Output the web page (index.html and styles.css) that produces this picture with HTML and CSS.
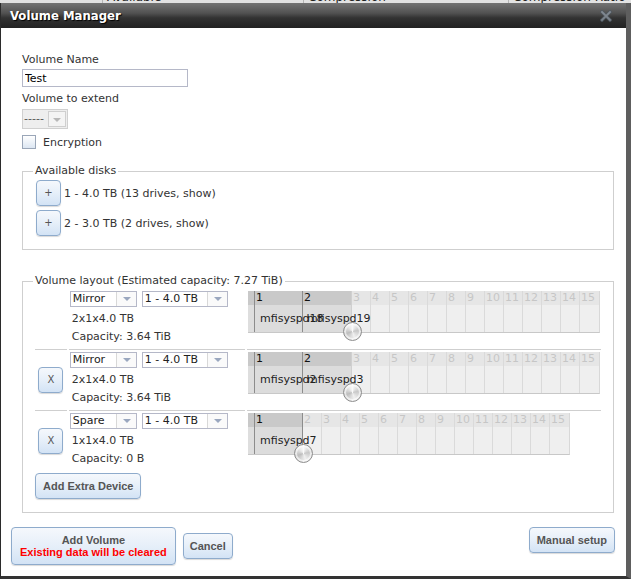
FILE: index.html
```html
<!DOCTYPE html>
<html lang="en">
<head>
    <meta charset="UTF-8">
    <meta name="viewport" content="width=device-width, initial-scale=1.0">
    <title>Volume Manager</title>
    <link rel="stylesheet" href="styles.css">
</head>
<body>
    <div class="page-head">
        <div class="col c1"><span></span></div>
        <div class="col c2"><span>Available</span></div>
        <div class="col c3"><span>Compression</span></div>
        <div class="col c4"><span>Compression Ratio</span></div>
    </div>

    <div class="dialog">
        <div class="titlebar">
            <span class="title">Volume Manager</span>
            <svg class="close" width="12" height="12" viewBox="0 0 12 12">
                <path d="M2 2 L10 10 M10 2 L2 10" stroke="#4f5861" stroke-width="3.6" stroke-linecap="square"/>
                <path d="M2 2 L10 10 M10 2 L2 10" stroke="#8d97a2" stroke-width="1.8" stroke-linecap="square"/>
            </svg>
        </div>

        <div class="content">
            <label class="label" for="volname">Volume Name</label>
            <input id="volname" class="text-input" type="text" value="Test">

            <div class="label extend">Volume to extend</div>
            <div class="select disabled">
                <span class="select-text">-----</span>
                <span class="select-arrow"></span>
            </div>

            <label class="check-row"><span class="checkbox"></span>Encryption</label>

            <fieldset class="group disks">
                <legend>Available disks</legend>
                <div class="disk-row">
                    <button class="btn square">+</button>
                    <span>1 - 4.0 TB (13 drives, show)</span>
                </div>
                <div class="disk-row">
                    <button class="btn square">+</button>
                    <span>2 - 3.0 TB (2 drives, show)</span>
                </div>
            </fieldset>

            <fieldset class="group layout">
                <legend>Volume layout (Estimated capacity: 7.27 TiB)</legend>
                <table class="vdevs">
                    <tr>
                        <td class="c-remove"></td>
                        <td class="c-opts">
                            <div class="opt-row">
                                <div class="select type"><span class="select-text">Mirror</span><span class="select-arrow"></span></div>
                                <div class="select size"><span class="select-text">1 - 4.0 TB</span><span class="select-arrow"></span></div>
                            </div>
                            <div class="vdev-info">2x1x4.0 TB</div>
                            <div class="vdev-info">Capacity: 3.64 TiB</div>
                        </td>
                        <td class="c-slots">
                            <div class="slots">
                                <div class="slot-edge"><span class="num"></span><span class="disk"></span></div>
                                <div class="slot used first"><span class="num">1</span><span class="disk"><span class="name">mfisyspd18</span></span></div>
                                <div class="slot used second"><span class="num">2</span><span class="disk"><span class="name">mfisyspd19</span></span></div>
                                <div class="slot"><span class="num">3</span><span class="disk"></span></div>
                                <div class="slot"><span class="num">4</span><span class="disk"></span></div>
                                <div class="slot"><span class="num">5</span><span class="disk"></span></div>
                                <div class="slot"><span class="num">6</span><span class="disk"></span></div>
                                <div class="slot"><span class="num">7</span><span class="disk"></span></div>
                                <div class="slot"><span class="num">8</span><span class="disk"></span></div>
                                <div class="slot"><span class="num">9</span><span class="disk"></span></div>
                                <div class="slot"><span class="num">10</span><span class="disk"></span></div>
                                <div class="slot"><span class="num">11</span><span class="disk"></span></div>
                                <div class="slot"><span class="num">12</span><span class="disk"></span></div>
                                <div class="slot"><span class="num">13</span><span class="disk"></span></div>
                                <div class="slot"><span class="num">14</span><span class="disk"></span></div>
                                <div class="slot"><span class="num">15</span><span class="disk"></span></div>
                                <span class="knob at-two"></span>
                            </div>
                        </td>
                    </tr>
                    <tr>
                        <td class="c-remove"><button class="btn square">X</button></td>
                        <td class="c-opts">
                            <div class="opt-row">
                                <div class="select type"><span class="select-text">Mirror</span><span class="select-arrow"></span></div>
                                <div class="select size"><span class="select-text">1 - 4.0 TB</span><span class="select-arrow"></span></div>
                            </div>
                            <div class="vdev-info">2x1x4.0 TB</div>
                            <div class="vdev-info">Capacity: 3.64 TiB</div>
                        </td>
                        <td class="c-slots">
                            <div class="slots">
                                <div class="slot-edge"><span class="num"></span><span class="disk"></span></div>
                                <div class="slot used first"><span class="num">1</span><span class="disk"><span class="name">mfisyspd2</span></span></div>
                                <div class="slot used second"><span class="num">2</span><span class="disk"><span class="name">mfisyspd3</span></span></div>
                                <div class="slot"><span class="num">3</span><span class="disk"></span></div>
                                <div class="slot"><span class="num">4</span><span class="disk"></span></div>
                                <div class="slot"><span class="num">5</span><span class="disk"></span></div>
                                <div class="slot"><span class="num">6</span><span class="disk"></span></div>
                                <div class="slot"><span class="num">7</span><span class="disk"></span></div>
                                <div class="slot"><span class="num">8</span><span class="disk"></span></div>
                                <div class="slot"><span class="num">9</span><span class="disk"></span></div>
                                <div class="slot"><span class="num">10</span><span class="disk"></span></div>
                                <div class="slot"><span class="num">11</span><span class="disk"></span></div>
                                <div class="slot"><span class="num">12</span><span class="disk"></span></div>
                                <div class="slot"><span class="num">13</span><span class="disk"></span></div>
                                <div class="slot"><span class="num">14</span><span class="disk"></span></div>
                                <div class="slot"><span class="num">15</span><span class="disk"></span></div>
                                <span class="knob at-two"></span>
                            </div>
                        </td>
                    </tr>
                    <tr>
                        <td class="c-remove"><button class="btn square">X</button></td>
                        <td class="c-opts">
                            <div class="opt-row">
                                <div class="select type"><span class="select-text">Spare</span><span class="select-arrow"></span></div>
                                <div class="select size"><span class="select-text">1 - 4.0 TB</span><span class="select-arrow"></span></div>
                            </div>
                            <div class="vdev-info">1x1x4.0 TB</div>
                            <div class="vdev-info">Capacity: 0 B</div>
                        </td>
                        <td class="c-slots">
                            <div class="slots">
                                <div class="slot-edge"><span class="num"></span><span class="disk"></span></div>
                                <div class="slot used first"><span class="num">1</span><span class="disk"><span class="name">mfisyspd7</span></span></div>
                                <div class="slot"><span class="num">2</span><span class="disk"></span></div>
                                <div class="slot"><span class="num">3</span><span class="disk"></span></div>
                                <div class="slot"><span class="num">4</span><span class="disk"></span></div>
                                <div class="slot"><span class="num">5</span><span class="disk"></span></div>
                                <div class="slot"><span class="num">6</span><span class="disk"></span></div>
                                <div class="slot"><span class="num">7</span><span class="disk"></span></div>
                                <div class="slot"><span class="num">8</span><span class="disk"></span></div>
                                <div class="slot"><span class="num">9</span><span class="disk"></span></div>
                                <div class="slot"><span class="num">10</span><span class="disk"></span></div>
                                <div class="slot"><span class="num">11</span><span class="disk"></span></div>
                                <div class="slot"><span class="num">12</span><span class="disk"></span></div>
                                <div class="slot"><span class="num">13</span><span class="disk"></span></div>
                                <div class="slot"><span class="num">14</span><span class="disk"></span></div>
                                <div class="slot"><span class="num">15</span><span class="disk"></span></div>
                                <span class="knob at-one"></span>
                            </div>
                        </td>
                    </tr>
                </table>
                <button class="btn extra">Add Extra Device</button>
            </fieldset>
        </div>

        <div class="actions">
            <div class="actions-left">
                <button class="btn add-volume">Add Volume<span class="warn">Existing data will be cleared</span></button>
                <button class="btn">Cancel</button>
            </div>
            <button class="btn manual">Manual setup</button>
        </div>
    </div>
</body>
</html>
```

FILE: styles.css
```css
body {
    margin: 0;
    background: #e6e6e6;
    font-family: "DejaVu Sans", Verdana, sans-serif;
    font-size: 11px;
    color: #333;
}

/* page behind the dialog */
.page-head {
    display: flex;
    height: 3px;
    overflow: hidden;
    background: #e2e2e2;
}

.page-head .col {
    padding-left: 4px;
    border-left: 1px solid #b5b5b5;
}

.page-head .col span {
    display: block;
    margin-top: -9px;
    line-height: 12px;
    font-size: 12px;
    color: #222;
}

.page-head .c1 { width: 98px; border-left: none; }
.page-head .c2 { width: 196px; }
.page-head .c3 { width: 200px; }
.page-head .c4 { flex: 1; }

/* dialog */
.dialog {
    position: absolute;
    top: 3px;
    left: 0;
    width: 631px;
    height: 576px;
    box-sizing: border-box;
    border-left: 1px solid #2b2b2b;
    border-right: 5px solid #5e5e5e;
    border-bottom: 3px solid #333;
    background: white;
}

.titlebar {
    display: flex;
    align-items: center;
    justify-content: space-between;
    height: 25px;
    padding: 0 14px 0 9px;
    background: linear-gradient(to bottom, #747474 0%, #525252 40%, #323232 60%, #222 100%);
}

.title {
    font-family: "DejaVu Sans Condensed", "DejaVu Sans", sans-serif;
    font-weight: bold;
    font-size: 13px;
    color: white;
    text-shadow: 1px 1px 1px #000;
}

.close {
    display: block;
    opacity: 0.8;
}

.content {
    padding: 24px 12px 0 21px;
}

.label {
    display: block;
    line-height: 16px;
}

.label.extend {
    margin-top: 4px;
}

.text-input {
    display: block;
    margin: 1px 0 0;
    width: 166px;
    height: 18px;
    box-sizing: border-box;
    padding: 0 2px;
    border: 1px solid #b5b8c8;
    font-family: inherit;
    font-size: 11px;
    color: #000;
    outline: none;
}

/* dojo style selects */
.select {
    display: flex;
    box-sizing: border-box;
    height: 16px;
    border: 1px solid #b5b8c8;
    background: white;
}

.select-text {
    flex: 1;
    padding-left: 2px;
    line-height: 14px;
    color: #222;
    white-space: nowrap;
}

.select-arrow {
    position: relative;
    width: 19px;
    border-left: 1px solid #d8d8d8;
    background: #fafafa;
}

.select-arrow::after {
    content: "";
    position: absolute;
    left: 6px;
    top: 5px;
    border-left: 4px solid transparent;
    border-right: 4px solid transparent;
    border-top: 4px solid #9aa7bf;
}

.select.disabled {
    margin-top: 2px;
    width: 46px;
    height: 20px;
    border-color: #d0d0d0;
    background: #eee;
}

.select.disabled .select-text {
    line-height: 18px;
    padding-left: 1px;
    color: #555;
}

.select.disabled .select-arrow {
    width: 16px;
    margin: 1px 1px 1px 0;
    border: 1px solid #cfcfcf;
    background: #f4f4f4;
}

.select.disabled .select-arrow::after {
    left: 4px;
    top: 6px;
    border-top-color: #b8b8b8;
}

.select.type { width: 67px; }
.select.size { width: 86px; }

.check-row {
    display: flex;
    align-items: center;
    height: 16px;
    margin-top: 5px;
}

.checkbox {
    width: 14px;
    height: 14px;
    box-sizing: border-box;
    margin-right: 7px;
    border: 1px solid #9aa6b8;
    background: linear-gradient(#fff, #dce6f2);
}

/* fieldsets */
.group {
    margin: 0;
    padding: 0 10px 13px;
    border: 1px solid #cfcfcf;
    min-width: 0;
}

.group legend {
    padding: 0 2px;
    line-height: 16px;
}

.group.disks {
    margin-top: 13px;
}

.group.layout {
    margin-top: 23px;
}

.disk-row {
    display: flex;
    align-items: center;
    margin: 4px 0 0 3px;
}

.disk-row:first-of-type {
    margin-top: 1px;
}

.disk-row span {
    margin-left: 3px;
}

/* buttons */
.btn {
    font-family: "Liberation Sans", Arial, sans-serif;
    font-weight: bold;
    font-size: 11px;
    line-height: 14px;
    color: #555;
    padding: 5px 6px;
    background: linear-gradient(to bottom, #f5f8fc 0%, #e6eff9 50%, #d3e3f5 100%);
    border: 1px solid #8eabcc;
    border-radius: 4px;
    box-shadow: 0 1px 1px rgba(0,0,0,0.15);
    cursor: pointer;
}

.btn.square {
    width: 25px;
    height: 26px;
    padding: 0;
    font-weight: normal;
    font-family: "DejaVu Sans", sans-serif;
    font-size: 10px;
}

.btn.extra {
    display: block;
    margin: 2px 0 0 2px;
    padding: 5px 7px;
}

/* vdev table */
.vdevs {
    border-collapse: separate;
    border-spacing: 2px 0;
}

.vdevs td {
    box-sizing: border-box;
    padding: 0;
    border-bottom: 1px solid #cfcfcf;
    vertical-align: top;
}

.vdevs tr:last-child td {
    border-bottom: none;
}

.vdevs .c-remove {
    width: 32px;
    text-align: center;
    vertical-align: middle;
}

.vdevs .c-opts {
    width: 177px;
    padding: 2px 0 3px 1px;
}

.vdevs .c-slots {
    width: 354px;
    padding: 2px 0 0 1px;
}

.opt-row {
    display: flex;
    gap: 5px;
}

.vdev-info {
    padding-left: 2px;
    line-height: 18px;
}

.opt-row + .vdev-info {
    margin-top: 3px;
}

/* disk slot grid */
.slots {
    position: relative;
    display: flex;
    width: fit-content;
    border-bottom: 1px solid #c8c8c8;
    border-right: 1px solid #d8d8d8;
}

.slot-edge,
.slot {
    display: flex;
    flex-direction: column;
    box-sizing: border-box;
}

.slot-edge {
    width: 7px;
    border-right: 1px solid #8c8c8c;
}

.slot {
    width: 19px;
    border-right: 1px solid #dadada;
}

.slot:last-of-type {
    border-right: none;
}

.num {
    height: 14px;
    line-height: 14px;
    padding-left: 1px;
    background: #e6e6e6;
    color: #c6c6c6;
}

.disk {
    height: 27px;
    line-height: 27px;
    padding-left: 5px;
    background: #efefef;
    white-space: nowrap;
}

/* disk names spill over the next slot, as in the original widget */
.disk .name {
    position: relative;
    z-index: 1;
    color: #222;
}

.slot-edge .num { background: #c9c9c9; }
.slot-edge .disk { background: #dedede; }

.slot.used .num {
    background: #c9c9c9;
    color: #111;
}

.slot.used .disk {
    background: #dcdcdc;
}

.slot.used.first {
    width: 48px;
    border-right-color: #8c8c8c;
}

.slot.used.second {
    width: 49px;
    border-right-color: #d0d0d0;
}

.slot.used.second .disk {
    padding-left: 4px;
}

.knob {
    position: absolute;
    z-index: 2;
    top: 31px;
    width: 19px;
    height: 19px;
    box-sizing: border-box;
    border: 1px solid #8e8e8e;
    border-radius: 50%;
    background: conic-gradient(#fafafa, #c8c8c8 22%, #f0f0f0 45%, #bdbdbd 70%, #e8e8e8 88%, #fafafa);
    box-shadow: inset 0 0 0 2px rgba(255,255,255,0.6);
}

.knob.at-two { left: 95px; }
.knob.at-one { left: 46px; }

/* bottom actions */
.actions {
    display: flex;
    align-items: flex-start;
    justify-content: space-between;
    padding: 14px 11px 0 10px;
}

.actions-left {
    display: flex;
    align-items: center;
    gap: 7px;
}

.btn.add-volume {
    padding: 6px 8px;
    line-height: 12px;
}

.btn.add-volume .warn {
    display: block;
    color: #f00;
}

.btn.manual {
    padding: 5px 7px;
}
```
